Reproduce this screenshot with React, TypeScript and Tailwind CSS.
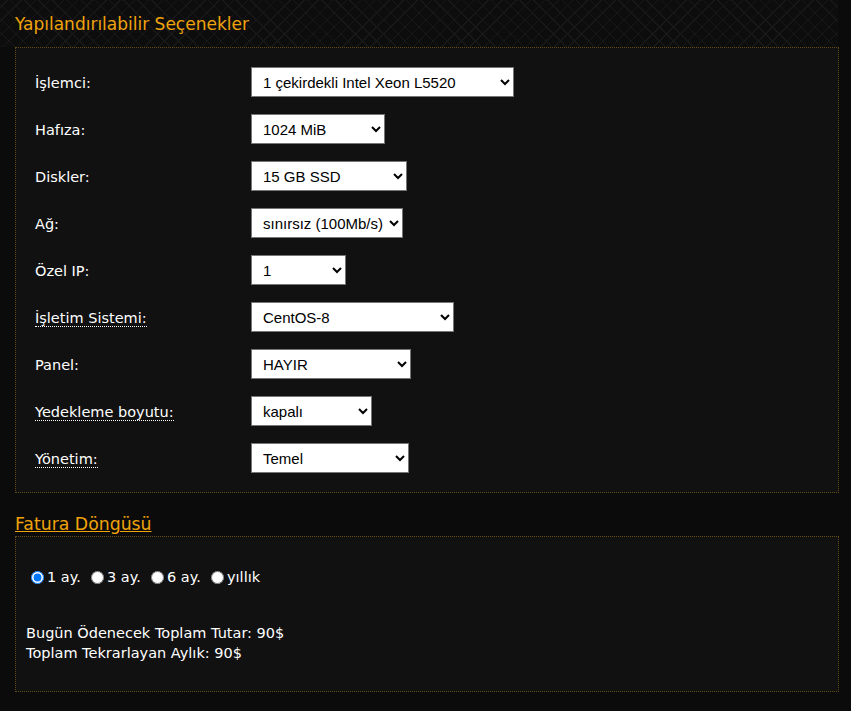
import { useState } from "react";

type Row = {
  label: string;
  value: string;
  width: string;
  dotted?: boolean;
};

const rows: Row[] = [
  { label: "İşlemci:", value: "1 çekirdekli Intel Xeon L5520", width: "w-[263px]" },
  { label: "Hafıza:", value: "1024 MiB", width: "w-[134px]" },
  { label: "Diskler:", value: "15 GB SSD", width: "w-[156px]" },
  { label: "Ağ:", value: "sınırsız (100Mb/s)", width: "w-[152px]" },
  { label: "Özel IP:", value: "1", width: "w-[95px]" },
  { label: "İşletim Sistemi:", value: "CentOS-8", width: "w-[203px]", dotted: true },
  { label: "Panel:", value: "HAYIR", width: "w-[160px]" },
  { label: "Yedekleme boyutu:", value: "kapalı", width: "w-[121px]", dotted: true },
  { label: "Yönetim:", value: "Temel", width: "w-[158px]", dotted: true },
];

const cycles = ["1 ay.", "3 ay.", "6 ay.", "yıllık"];

export default function App() {
  const [cycle, setCycle] = useState("1 ay.");

  return (
    <div className="min-h-[711px] bg-[#0b0b0b] font-['DejaVu_Sans',sans-serif] text-white">
      <div className="w-[838px]">
        {/* Header strip with quilted pattern */}
        <div className="h-[47px] pl-[15px] pt-[13px] bg-[#0d0d0d] bg-[image:repeating-linear-gradient(45deg,#181818_0_1px,transparent_1px_10px),repeating-linear-gradient(-45deg,#181818_0_1px,transparent_1px_10px)]">
          <h2 className="text-[17px] leading-[22px] text-[#f0a30a]">Yapılandırılabilir Seçenekler</h2>
        </div>

        <div className="ml-[15px] w-[824px] border border-dotted border-[#634a14] bg-[#111111] px-[19px] pt-[19px] pb-[19px] flex flex-col gap-[17px]">
          {rows.map((r) => (
            <div key={r.label} className="flex items-center h-[30px]">
              <div className="w-[216px] pt-[4px] text-[14.5px]">
                <span className={r.dotted ? "border-b border-dotted border-white" : ""}>{r.label}</span>
              </div>
              <select
                defaultValue={r.value}
                className={`${r.width} h-[30px] bg-white text-black border border-[#767676] pl-[7px] text-[15px] font-['Liberation_Sans',Arial,sans-serif]`}
              >
                <option value={r.value}>{r.value}</option>
              </select>
            </div>
          ))}
        </div>

        <div className="pl-[15px] pt-[20px] h-[43px]">
          <a href="#" className="text-[17.3px] leading-[22px] text-[#f0a30a] underline">Fatura Döngüsü</a>
        </div>

        <div className="ml-[15px] w-[824px] h-[156px] border border-dotted border-[#634a14] bg-[#111111] pt-[30px] px-[10px] text-[14.5px]">
          <div className="flex items-center pl-[5px]">
            {cycles.map((c) => (
              <label key={c} className="flex items-center w-[60px]">
                <input
                  type="radio"
                  name="cycle"
                  checked={cycle === c}
                  onChange={() => setCycle(c)}
                  className="m-0 mr-[3px] w-[13px] h-[13px]"
                />
                {c}
              </label>
            ))}
          </div>
          <div className="mt-[34px] leading-[20px]">
            <div>Bugün Ödenecek Toplam Tutar: 90$</div>
            <div>Toplam Tekrarlayan Aylık: 90$</div>
          </div>
        </div>
      </div>
    </div>
  );
}
